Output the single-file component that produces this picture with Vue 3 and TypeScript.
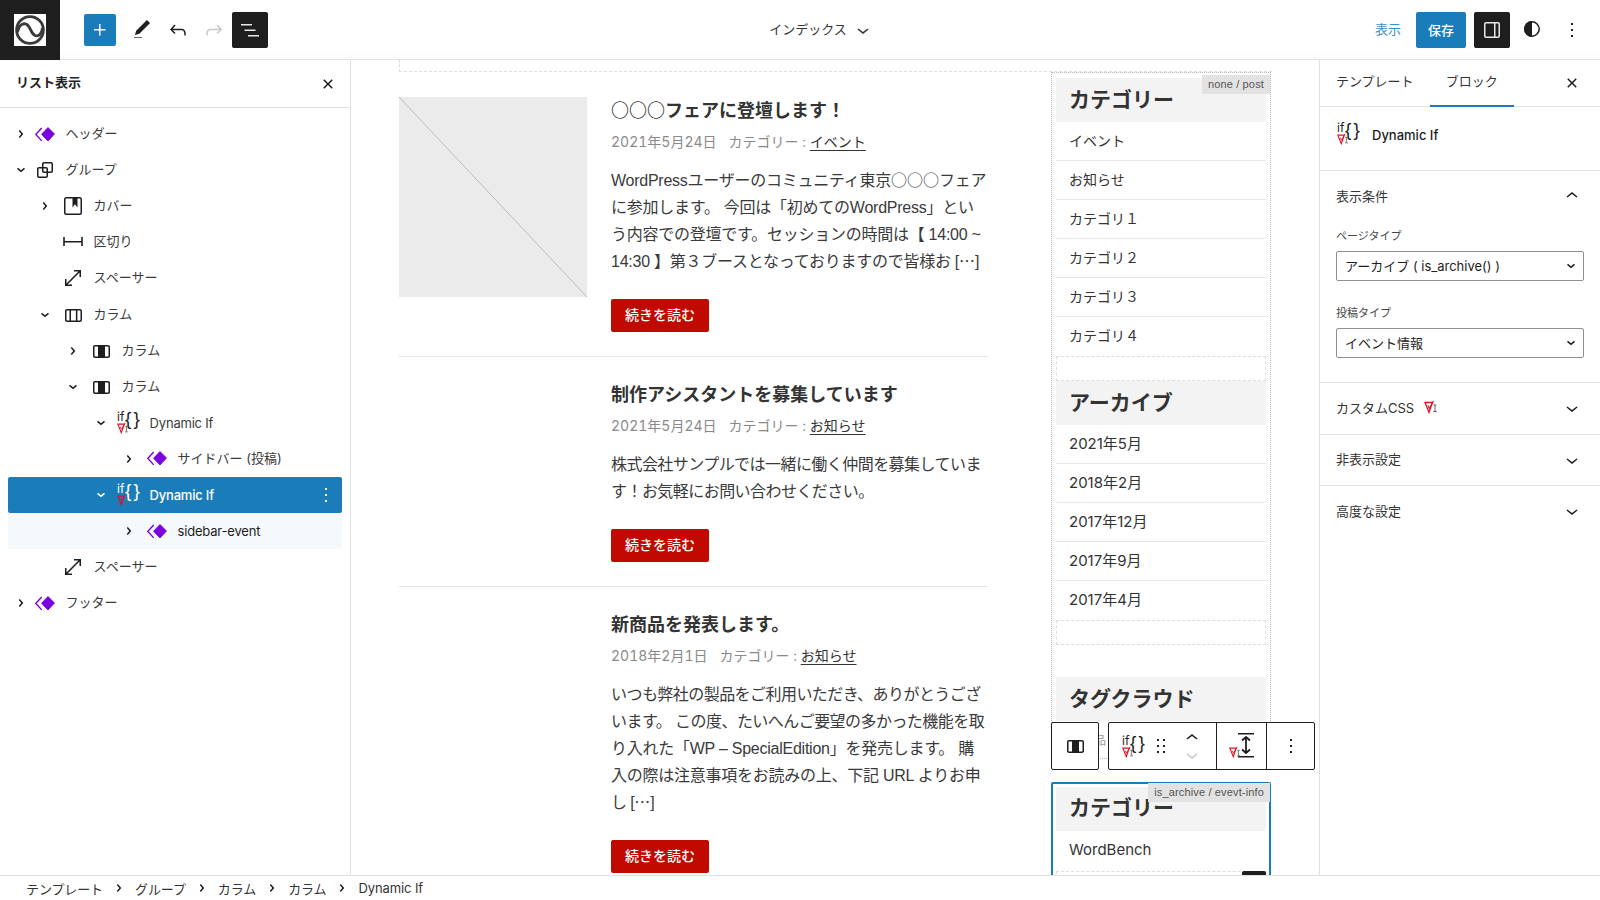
<script setup lang="ts">
import { h } from 'vue'

const icons: Record<string, string> = {
  plus: 'M11 12.5V17.5H12.5V12.5H17.5V11H12.5V6H11V11H6V12.5H11Z',
  pen: 'M20.1 5.1L16.9 2 6.2 12.7l-1.3 4.4 4.5-1.3L20.1 5.1z',
  undo: 'M18.3 11.7c-.6-.6-1.4-.9-2.3-.9H6.7l2.9-3.3-1.1-1-4.5 5L8.5 16l1-1-2.7-2.7H16c.5 0 .9.2 1.3.5 1 1 1 3.4 1 4.5v.3h1.5v-.2c0-1.5 0-4.3-1.5-5.7z',
  redo: 'M15.6 6.5l-1.1 1 2.9 3.3H8c-.9 0-1.7.3-2.3.9-1.4 1.5-1.4 4.2-1.4 5.6v.2h1.5v-.3c0-1.1 0-3.5 1-4.5.3-.3.7-.5 1.3-.5h9.2L14.5 15l1.1 1.1 4.6-4.6-4.6-5z',
  list: 'M3 6h11v1.5H3V6Zm3.5 5.5h11V13h-11v-1.5ZM21 17H10v1.5h11V17Z',
  sidebar: 'M18 4H6c-1.1 0-2 .9-2 2v12c0 1.1.9 2 2 2h12c1.1 0 2-.9 2-2V6c0-1.1-.9-2-2-2zM5.5 18V6c0-.3.2-.5.5-.5h8v13H6c-.3 0-.5-.2-.5-.5zm13 0c0 .3-.2.5-.5.5h-2.5v-13H18c.3 0 .5.2.5.5v12z',
  kebab: 'M13 19h-2v-2h2v2zm0-6h-2v-2h2v2zm0-6h-2V5h2v2z',
  closeSmall: 'M12 13.06l3.712 3.713 1.061-1.06L13.061 12l3.712-3.712-1.06-1.06L12 10.938 8.288 7.227l-1.061 1.06L10.939 12l-3.712 3.712 1.06 1.061L12 13.061z',
  right: 'M10.8622 8.04053L14.2805 12.0286L10.8622 16.0167L9.72327 15.0405L12.3049 12.0286L9.72327 9.01672L10.8622 8.04053Z',
  down: 'm15.99 10.889-3.988 3.418-3.988-3.418.976-1.14 3.012 2.582 3.012-2.581.976 1.139Z',
  chevUp: 'M6.5 12.4L12 8l5.5 4.4-.9 1.2L12 10l-4.5 3.6-1-1.2z',
  chevDown: 'M17.5 11.6L12 16l-5.5-4.4.9-1.2L12 14l4.6-3.6 1 1.2z',
  drag: 'M8 7h2V5H8v2zm0 6h2v-2H8v2zm0 6h2v-2H8v2zm6-14v2h2V5h-2zm0 8h2v-2h-2v2zm0 6h2v-2h-2v2z',
  group: 'M18 4h-7c-1.1 0-2 .9-2 2v3H6c-1.1 0-2 .9-2 2v7c0 1.1.9 2 2 2h7c1.1 0 2-.9 2-2v-3h3c1.1 0 2-.9 2-2V6c0-1.1-.9-2-2-2zm-4.5 14c0 .3-.2.5-.5.5H6c-.3 0-.5-.2-.5-.5v-7c0-.3.2-.5.5-.5h3V13c0 1.1.9 2 2 2h2.5v3zm0-4.5H11c-.3 0-.5-.2-.5-.5v-2.5H13c.3 0 .5.2.5.5v2.5zm5-.5c0 .3-.2.5-.5.5h-3V11c0-1.1-.9-2-2-2h-2.5V6c0-.3.2-.5.5-.5h7c.3 0 .5.2.5.5v7z',
  cover: 'M18.7 3H5.3C4 3 3 4 3 5.3v13.4C3 20 4 21 5.3 21h13.4c1.3 0 2.3-1 2.3-2.3V5.3C21 4 20 3 18.7 3zm.8 15.7c0 .4-.4.8-.8.8H5.3c-.4 0-.8-.4-.8-.8V5.3c0-.4.4-.8.8-.8h6.2v8.9l2.5-3.1 2.5 3.1V4.5h2.2c.4 0 .8.4.8.8v13.4z',
  separator: 'M20.2 7v4H3.8V7H2.2v9h1.6v-3.5h16.4V16h1.6V7z',
  spacer: 'M13 4v1.5h4.4L5.5 17.4V13H4v7h7v-1.5H6.6L18.5 6.6V11H20V4z',
  columns: 'M19 6H6c-1.1 0-2 .9-2 2v9c0 1.1.9 2 2 2h13c1.1 0 2-.9 2-2V8c0-1.1-.9-2-2-2zm-4.1 1.5v10H10v-10h4.9zM5.5 17V8c0-.3.2-.5.5-.5h2.5v10H6c-.3 0-.5-.2-.5-.5zm14 0c0 .3-.2.5-.5.5h-2.6v-10H19c.3 0 .5.2.5.5v9z',
  column: 'M19 6H6c-1.1 0-2 .9-2 2v9c0 1.1.9 2 2 2h13c1.1 0 2-.9 2-2V8c0-1.1-.9-2-2-2zM6 17.5c-.3 0-.5-.2-.5-.5V8c0-.3.2-.5.5-.5h3v10H6zm13.5-.5c0 .3-.2.5-.5.5h-3v-10h3c.3 0 .5.2.5.5v9z'
}

const Ico = (props: { n: string; s?: number }) =>
  h('svg', { viewBox: '0 0 24 24', width: props.s || 24, height: props.s || 24, fill: 'currentColor', style: 'display:block;flex:none' }, [h('path', { d: icons[props.n] })])
Ico.props = ['n', 's']

// The If{} block icon, written out at each use so its letters stay real text.
const Dyn = () =>
  h('svg', { viewBox: '0 0 24 23', width: 24, height: 23, style: 'display:block;flex:none;overflow:visible' }, [
    h('text', { x: 0, y: 10, 'font-family': 'Inter, sans-serif', 'font-size': 12, fill: 'currentColor' }, 'if'),
    h('text', { x: 8, y: 14, 'font-family': "'Liberation Sans', sans-serif", 'font-size': 19, fill: 'currentColor' }, '{'),
    h('text', { x: 16.5, y: 14, 'font-family': "'Liberation Sans', sans-serif", 'font-size': 19, fill: 'currentColor' }, '}'),
    h('use', { href: '#vk', x: 0, y: 11, width: 12, height: 12 })
  ])

// Circles and ellipses take the CJK font's full-width forms, as in the reference.
const Rings = (props: { t: string }) =>
  props.t.split(/(○+|…)/).map((part) =>
    /^(○+|…)$/.test(part)
      ? h('b', { style: 'font-family:"Noto Sans CJK JP",sans-serif;font-weight:inherit;letter-spacing:0;line-height:0' }, part)
      : part
  )
Rings.props = ['t']

interface Row { level: number; label: string; icon: string; chev?: 'right' | 'down'; selected?: boolean; child?: boolean }
const rows: Row[] = [
  { level: 0, label: 'ヘッダー', icon: 'pattern', chev: 'right' },
  { level: 0, label: 'グループ', icon: 'group', chev: 'down' },
  { level: 1, label: 'カバー', icon: 'cover', chev: 'right' },
  { level: 1, label: '区切り', icon: 'separator' },
  { level: 1, label: 'スペーサー', icon: 'spacer' },
  { level: 1, label: 'カラム', icon: 'columns', chev: 'down' },
  { level: 2, label: 'カラム', icon: 'column', chev: 'right' },
  { level: 2, label: 'カラム', icon: 'column', chev: 'down' },
  { level: 3, label: 'Dynamic If', icon: 'dyn', chev: 'down' },
  { level: 4, label: 'サイドバー (投稿)', icon: 'pattern', chev: 'right' },
  { level: 3, label: 'Dynamic If', icon: 'dyn', chev: 'down', selected: true },
  { level: 4, label: 'sidebar-event', icon: 'pattern', chev: 'right', child: true },
  { level: 1, label: 'スペーサー', icon: 'spacer' },
  { level: 0, label: 'フッター', icon: 'pattern', chev: 'right' }
]
const isLatin = (s: string) => /^[\x00-\x7f]+$/.test(s)
const isTight = (s: string) => !/[A-Za-z0-9]/.test(s)

interface Post { title: string; date: string; cat: string; image?: boolean; lines: string[] }
const posts: Post[] = [
  {
    title: '○○○フェアに登壇します！', date: '2021年5月24日', cat: 'イベント', image: true,
    lines: [
      'WordPressユーザーのコミュニティ東京○○○フェア',
      'に参加します。 今回は「初めてのWordPress」とい',
      'う内容での登壇です。セッションの時間は【 14:00 ~',
      '14:30 】第３ブースとなっておりますので皆様お […]'
    ]
  },
  {
    title: '制作アシスタントを募集しています', date: '2021年5月24日', cat: 'お知らせ',
    lines: ['株式会社サンプルでは一緒に働く仲間を募集していま', 'す！お気軽にお問い合わせください。']
  },
  {
    title: '新商品を発表します。', date: '2018年2月1日', cat: 'お知らせ',
    lines: [
      'いつも弊社の製品をご利用いただき、ありがとうござ',
      'います。 この度、たいへんご要望の多かった機能を取',
      'り入れた「WP – SpecialEdition」を発売します。 購',
      '入の際は注意事項をお読みの上、下記 URL よりお申',
      'し […]'
    ]
  }
]

const categories = ['イベント', 'お知らせ', 'カテゴリ１', 'カテゴリ２', 'カテゴリ３', 'カテゴリ４']
const archives = ['2021年5月', '2018年2月', '2017年12月', '2017年9月', '2017年4月']
const crumbs = ['テンプレート', 'グループ', 'カラム', 'カラム', 'Dynamic If']
const sections = ['非表示設定', '高度な設定']
</script>

<template>
  <div class="app">
    <svg class="defs" aria-hidden="true">
      <symbol id="vk" viewBox="0 0 14 14">
        <path d="M1 2.5h7.5L5 12.5Z" fill="none" stroke="#e0102a" stroke-width="1.3" />
        <path d="M4 5.5 5.2 8.5 9.5 1" fill="none" stroke="#e0102a" stroke-width="1.1" />
        <path d="M9.5 5h3M11 5v6M9.3 11.5h3.5" fill="none" stroke="#666" stroke-width="1" />
      </symbol>
      <symbol id="pattern" viewBox="0 0 20 15">
        <path d="M13 .6 19.4 7 13 13.9 6.6 7.2Z" fill="#7a00df" stroke="#7a00df" stroke-linejoin="round" />
        <path d="M6.7 1 .9 7.4 6.7 13.9" fill="none" stroke="#7a00df" stroke-width="1.4" />
      </symbol>
    </svg>

    <header class="topbar">
      <div class="top-left">
        <div class="logo">
          <svg viewBox="0 0 32 32" width="32" height="32">
            <rect width="32" height="32" fill="#fff" />
            <circle cx="16" cy="16" r="13.4" fill="none" stroke="#3a3a3a" stroke-width="2.8" />
            <path d="M3.5 18C4.5 11 9 9 12 10C17 12 16 19 21 21.5C25 23 28 19 28.5 14" fill="none" stroke="#3a3a3a" stroke-width="2.8" />
          </svg>
        </div>
        <button class="add"><Ico n="plus" /></button>
        <span class="tool pen">
          <Ico n="pen" />
          <i class="pen-line"></i>
        </span>
        <span class="tool"><Ico n="undo" /></span>
        <span class="tool off"><Ico n="redo" /></span>
        <button class="dark list"><Ico n="list" /></button>
      </div>
      <div class="top-title">
        <span>インデックス</span>
        <Ico n="chevDown" />
      </div>
      <div class="top-right">
        <a class="preview">表示</a>
        <button class="save">保存</button>
        <button class="dark side"><Ico n="sidebar" /></button>
        <span class="contrast">
          <svg viewBox="0 0 24 24" width="24" height="24">
            <circle cx="12" cy="12" r="7.2" fill="none" stroke="#1e1e1e" stroke-width="1.5" />
            <path d="M12 4a8 8 0 0 0 0 16Z" fill="#1e1e1e" />
          </svg>
        </span>
        <span class="more"><Ico n="kebab" /></span>
      </div>
    </header>

    <main class="workspace">
      <aside class="left">
        <div class="left-head">
          <strong>リスト表示</strong>
          <Ico n="closeSmall" />
        </div>
        <ul class="tree">
          <li
            v-for="(r, i) in rows"
            :key="i"
            class="row"
            :class="{ selected: r.selected, child: r.child, top: r.level === 0 }"
            :style="{ paddingLeft: 28 * r.level + 'px' }"
          >
            <span class="chev"><Ico v-if="r.chev" :n="r.chev" /></span>
            <span class="row-icon">
              <svg v-if="r.icon === 'pattern'" width="20" height="15"><use href="#pattern" /></svg>
              <Dyn v-else-if="r.icon === 'dyn'" />
              <Ico v-else :n="r.icon" />
            </span>
            <span class="row-label" :class="{ jp: !isLatin(r.label) }">{{ r.label }}</span>
            <Ico v-if="r.selected" n="kebab" class="row-more" />
          </li>
        </ul>
      </aside>

      <section class="canvas">
        <div class="topline"></div>
        <div class="page">
          <div class="posts">
            <article v-for="p in posts" :key="p.title" class="post">
              <div class="thumb">
                <svg v-if="p.image" viewBox="0 0 188 200" width="188" height="200">
                  <rect width="188" height="200" fill="#ebebeb" />
                  <path d="M0 0 188 200" stroke="#bbb" stroke-width="1" />
                </svg>
              </div>
              <div class="post-body">
                <h2><Rings :t="p.title" /></h2>
                <p class="meta">
                  {{ p.date }}<span class="catlabel">カテゴリー :</span> <a>{{ p.cat }}</a>
                </p>
                <p class="excerpt">
                  <span v-for="l in p.lines" :key="l" :class="{ tight: isTight(l) }"><Rings :t="l" /></span>
                </p>
                <button class="more-btn">続きを読む</button>
              </div>
            </article>
          </div>

          <div class="side-col">
            <div class="dotted">
              <span class="tag">none / post</span>
              <h3>カテゴリー</h3>
              <ul class="wlist">
                <li v-for="c in categories" :key="c">{{ c }}</li>
              </ul>
              <div class="ph"></div>
              <h3>アーカイブ</h3>
              <ul class="wlist wide-text">
                <li v-for="a in archives" :key="a">{{ a }}</li>
              </ul>
              <div class="ph"></div>
              <h3 class="gap">タグクラウド</h3>
              <p class="tags">新商品</p>
            </div>
            <div class="picked">
              <span class="tag wide">is_archive / evevt-info</span>
              <h3>カテゴリー</h3>
              <ul class="wlist wide-text">
                <li>WordBench</li>
              </ul>
              <div class="ph small"><i></i></div>
            </div>
          </div>
        </div>

        <div class="blocktools">
          <div class="tb single"><Ico n="column" /></div>
          <div class="tb multi">
            <div class="tb-main">
              <span class="tdyn"><Dyn /></span>
              <span class="tdrag"><Ico n="drag" /></span>
              <span class="mover">
                <Ico n="chevUp" />
                <Ico n="chevDown" class="dim" />
              </span>
            </div>
            <div class="tb-height">
              <svg class="hvk" width="12" height="12"><use href="#vk" /></svg>
              <svg class="hicon" viewBox="0 0 18 26" width="18" height="26">
                <path d="M1 .8h16M1 23.8h16" fill="none" stroke="#1e1e1e" stroke-width="1.5" />
                <path d="M9 4v16M5 7.5l4-3.5 4 3.5M5 16.5l4 3.5 4-3.5" fill="none" stroke="#1e1e1e" stroke-width="1.8" />
              </svg>
            </div>
            <div class="tb-more"><Ico n="kebab" /></div>
          </div>
        </div>
      </section>

      <aside class="right">
        <div class="tabs">
          <span class="tab">テンプレート</span>
          <span class="tab active">ブロック</span>
          <Ico n="closeSmall" class="tabs-close" />
        </div>
        <div class="block-card">
          <span class="card-icon"><Dyn /></span>
          <strong>Dynamic If</strong>
        </div>
        <div class="sect open">
          <div class="sect-head"><span>表示条件</span><Ico n="chevUp" /></div>
          <label>ページタイプ</label>
          <div class="select"><span>アーカイブ ( is_archive() )</span><Ico n="down" /></div>
          <label>投稿タイプ</label>
          <div class="select"><span>イベント情報</span><Ico n="down" /></div>
        </div>
        <div class="sect">
          <div class="sect-head">
            <span class="css-title">カスタムCSS <svg width="14" height="14"><use href="#vk" /></svg></span>
            <Ico n="chevDown" />
          </div>
        </div>
        <div v-for="s in sections" :key="s" class="sect">
          <div class="sect-head"><span>{{ s }}</span><Ico n="chevDown" /></div>
        </div>
      </aside>
    </main>

    <footer class="crumbs">
      <template v-for="(c, i) in crumbs" :key="i">
        <span>{{ c }}</span>
        <Ico v-if="i < crumbs.length - 1" n="right" class="crumb-sep" />
      </template>
    </footer>
  </div>
</template>

<style>
html, body { margin: 0; padding: 0; background: #fff; }
</style>

<style scoped>
.app {
  width: 1600px;
  height: 900px;
  display: grid;
  grid-template-rows: 60px 815px 25px;
  overflow: hidden;
  position: relative;
  font-family: Inter, "Noto Sans CJK JP", sans-serif;
  font-size: 13px;
  color: #1e1e1e;
  background: #fff;
}
.defs { position: absolute; width: 0; height: 0; }
button { border: 0; padding: 0; font: inherit; cursor: pointer; }
ul { list-style: none; margin: 0; padding: 0; }
h2, h3, p { margin: 0; }

.topbar {
  display: flex;
  align-items: center;
  border-bottom: 1px solid #e0e0e0;
  box-sizing: border-box;
  background: linear-gradient(#fff 50px, #fbfbfb);
}
.top-left { width: 280px; display: flex; align-items: center; height: 100%; flex: none; }
.logo {
  width: 60px;
  height: 60px;
  margin-bottom: -1px;
  align-self: flex-start;
  background: #1e1e1e;
  display: flex;
  align-items: center;
  justify-content: center;
}
.add {
  width: 32px;
  height: 32px;
  margin-left: 24px;
  border-radius: 2px;
  background: #1b7cba;
  color: #fff;
  display: flex;
  align-items: center;
  justify-content: center;
}
.tool { width: 24px; height: 24px; margin-left: 12px; flex: none; position: relative; }
.pen { margin-left: 14px; }
.pen-line { position: absolute; left: 4px; top: 19.3px; width: 8px; height: 1.5px; background: #666; }
.off { color: #c8c8c8; }
.dark {
  width: 36px;
  height: 36px;
  border-radius: 2px;
  background: #1e1e1e;
  color: #e8e8e8;
  display: flex;
  align-items: center;
  justify-content: center;
  flex: none;
}
.list { margin-left: 6px; }
.top-title { flex: 1; display: flex; align-items: center; justify-content: center; gap: 4px; color: #333; padding-left: 4px; }
.top-title span { margin-top: -3px; }
.top-right { width: 240px; flex: none; display: flex; align-items: center; justify-content: flex-end; padding-right: 16px; box-sizing: border-box; }
.preview { color: #3d8fc4; margin: -2px 15px 0 0; }
.save {
  width: 50px;
  height: 36px;
  background: #1b7cba;
  color: #fff;
  border-radius: 2px;
  font-weight: 500;
  margin-right: 8px;
}
.contrast { margin: 2px 0 0 10px; }
.more { margin-left: 16px; }

.workspace { display: flex; min-height: 0; overflow: hidden; }

.left { width: 351px; flex: none; box-sizing: border-box; border-right: 1px solid #e0e0e0; }
.left-head {
  height: 48px;
  box-sizing: border-box;
  border-bottom: 1px solid #e0e0e0;
  display: flex;
  align-items: center;
  justify-content: space-between;
  padding: 0 10px 0 16px;
}
.left-head strong { font-weight: 600; color: #222; margin-top: -5px; }
.tree { padding: 8px 8px 0; }
.row {
  height: 36.1px;
  display: flex;
  align-items: center;
  color: #3a3a3a;
  border-radius: 2px;
  position: relative;
}
.chev { width: 24px; height: 24px; margin-left: -3.4px; margin-right: -3.4px; flex: none; color: #1e1e1e; }
.top .chev { transform: translateX(4px); }
.row-icon { width: 24px; height: 24px; margin-left: 7.4px; flex: none; display: flex; align-items: center; justify-content: center; color: #1e1e1e; }
.row-label { margin-left: 9px; letter-spacing: -0.2px; }
.row-label.jp { margin-top: -3px; letter-spacing: 0; }
.selected { background: #1b7cba; color: #fff; }
.selected .chev, .selected .row-icon { color: #fff; }
.selected .row-label { font-weight: 500; }
.row-more { position: absolute; right: 4px; top: 6px; color: #fff; }
.child { background: #f5f9fc; color: #1e1e1e; }

.canvas { flex: 1; min-width: 0; position: relative; overflow: hidden; }
.topline {
  height: 12px;
  margin-left: 48px;
  width: 873px;
  box-sizing: border-box;
  border-left: 1px dashed #ddd;
  border-bottom: 1px dashed #ddd;
}
.page { display: flex; padding-left: 48px; gap: 63px; }
.posts { width: 589px; flex: none; padding-top: 1px; }
.post {
  display: flex;
  gap: 24px;
  padding: 24px 0;
  border-bottom: 1px solid #e6e6e6;
}
.thumb { width: 188px; flex: none; }
.thumb svg { display: block; }
.post-body { flex: 1; min-width: 0; color: #333; }
.post-body h2 { font-size: 18px; line-height: 26px; padding-top: 1px; font-weight: 700; color: #333; }
.meta { font-size: 14px; line-height: 20px; margin-top: 8px; color: #8a8a8a; font-variant-numeric: tabular-nums; }
.catlabel { margin-left: 12px; }
.meta a { color: #333; text-decoration: underline; text-underline-offset: 3px; }
.excerpt {
  font-family: "Liberation Sans", "Noto Sans CJK JP", sans-serif;
  font-size: 16px;
  line-height: 27px;
  margin-top: 15px;
  color: #3a3a3a;
  letter-spacing: -0.25px;
}
.excerpt span { display: block; white-space: nowrap; }
.excerpt span.tight { letter-spacing: -0.55px; }
.more-btn {
  display: block;
  margin-top: 24px;
  width: 98px;
  height: 33px;
  padding-bottom: 3px;
  background: #c00a00;
  color: #fff;
  border-radius: 2px;
  font-size: 14px;
  font-weight: 500;
}

.side-col { width: 220px; flex: none; }
.dotted {
  position: relative;
  height: 687px;
  box-sizing: border-box;
  border: 1px dotted #b8b8b8;
  padding: 5px 4px 0;
  overflow: hidden;
}
.tag {
  position: absolute;
  top: 2px;
  right: 0;
  height: 19px;
  line-height: 19px;
  padding: 0 6px;
  background: #e2e2e2;
  color: #555;
  font-family: "Liberation Sans", sans-serif;
  font-size: 11px;
  letter-spacing: 0.15px;
  z-index: 1;
}
.side-col h3 {
  height: 44px;
  line-height: 43px;
  background: #f3f3f3;
  padding-left: 13px;
  font-size: 21px;
  font-weight: 700;
  color: #333;
}
.picked h3 { line-height: 42px; }
.side-col h3.gap { margin-top: 32px; }
.wlist li {
  height: 39px;
  line-height: 38px;
  box-sizing: border-box;
  padding-left: 13px;
  border-bottom: 1px solid #e6e6e6;
  font-size: 14px;
  color: #333;
}
.wide-text li { font-size: 15px; }
.wlist li:last-child { border-bottom: 0; }
.ph { height: 25px; box-sizing: border-box; border: 1px dashed #ddd; }
.tags { font-size: 12px; color: #999; line-height: 20px; padding: 10px 0 0 14px; }
.picked {
  position: relative;
  margin-top: 23px;
  height: 120px;
  box-sizing: border-box;
  border: 2px solid #1b7cba;
  border-radius: 2px;
  padding: 3px 3px 0;
}
.wide { top: -1px; right: -1px; }
.small { position: relative; height: 40px; margin-top: 1px; }
.small i { position: absolute; right: -1px; top: -1px; width: 24px; height: 8px; background: #1e1e1e; border-radius: 2px 2px 0 0; }

.blocktools { position: absolute; left: 700px; top: 662px; display: flex; gap: 9px; }
.tb {
  height: 48px;
  box-sizing: border-box;
  background: #fff;
  border: 1px solid #1e1e1e;
  border-radius: 2px;
  display: flex;
  align-items: center;
}
.single { width: 48px; justify-content: center; }
.multi { width: 207px; }
.tb-main { width: 108px; height: 100%; box-sizing: border-box; border-right: 1px solid #1e1e1e; display: flex; align-items: center; position: relative; flex: none; }
.tdyn { margin-left: 13px; flex: none; }
.tdrag { margin-left: 3px; }
.mover { position: absolute; left: 71px; top: 0; height: 100%; width: 24px; color: #1e1e1e; }
.mover svg { position: absolute; left: 0; }
.mover svg:first-child { top: 3px; }
.mover .dim { top: 20px; color: #c8c8c8; }
.tb-height { width: 50px; height: 100%; box-sizing: border-box; border-right: 1px solid #1e1e1e; display: flex; align-items: center; padding-left: 12px; flex: none; }
.hvk { margin-top: 12px; }
.hicon { margin-left: -4px; margin-top: -1px; }
.tb-more { flex: 1; display: flex; justify-content: center; }

.right { width: 281px; flex: none; box-sizing: border-box; border-left: 1px solid #e0e0e0; color: #333; }
.tabs {
  height: 47px;
  box-sizing: border-box;
  border-bottom: 1px solid #e0e0e0;
  display: flex;
  position: relative;
  padding-left: 16px;
}
.tab { height: 46px; line-height: 42px; box-sizing: border-box; }
.tab.active { margin-left: 16px; padding: 0 16px; border-bottom: 2px solid #1b7cba; height: 47px; }
.tabs-close { position: absolute; right: 16px; top: 11px; color: #1e1e1e; }
.block-card { height: 64px; box-sizing: border-box; border-bottom: 1px solid #e0e0e0; display: flex; align-items: flex-start; padding: 15px 0 0 17px; }
.card-icon { flex: none; color: #1e1e1e; }
.block-card strong { margin: 5px 0 0 11px; font-weight: 500; line-height: 16px; color: #1e1e1e; }
.sect { border-bottom: 1px solid #e0e0e0; }
.sect:last-child { border-bottom: 0; }
.sect.open { height: 212px; box-sizing: border-box; }
.sect-head {
  height: 50.5px;
  padding: 0 16px;
  display: flex;
  align-items: center;
  justify-content: space-between;
}
.sect-head svg { color: #1e1e1e; }
.sect-head > span { margin-top: -2px; }
.css-title { display: flex; align-items: center; gap: 10px; }
.sect label { display: block; margin: 6px 0 7px 16px; font-size: 11px; line-height: 16px; color: #444; }
.sect label + .select + label { margin-top: 24px; }
.select {
  margin: 0 16px;
  height: 30px;
  box-sizing: border-box;
  border: 1px solid #8c8f94;
  border-radius: 2px;
  display: flex;
  align-items: center;
  justify-content: space-between;
  padding: 0 0 0 8px;
  color: #1e1e1e;
}

.crumbs {
  border-top: 1px solid #e0e0e0;
  box-sizing: border-box;
  display: flex;
  align-items: center;
  padding-left: 26px;
  color: #333;
  letter-spacing: -0.1px;
}
.crumb-sep { margin: 0 4px; color: #1e1e1e; }
</style>
